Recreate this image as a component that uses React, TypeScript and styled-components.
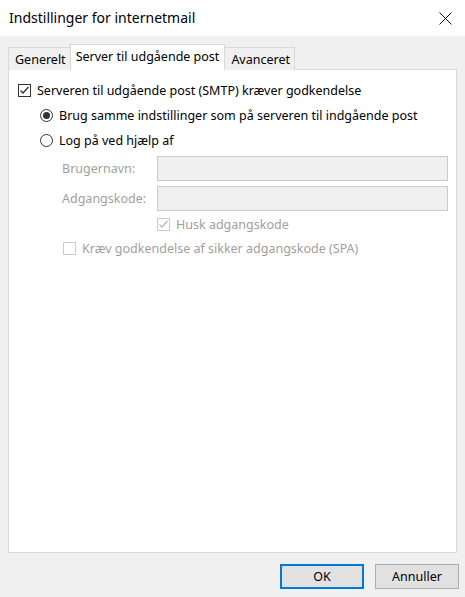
import React from "react";
import styled, { createGlobalStyle, css } from "styled-components";

const GlobalStyle = createGlobalStyle`
  html, body { margin: 0; padding: 0; }
  body { font-family: "Noto Sans", "Open Sans", sans-serif; font-size: 12.5px; color: #000; }
  * { box-sizing: border-box; }
`;

const Window = styled.div`
  width: 465px;
  height: 597px;
  display: flex;
  flex-direction: column;
  background: #f0f0f0;
  overflow: hidden;
`;

const TitleBar = styled.div`
  height: 36px;
  flex: none;
  background: #fff;
  display: flex;
  align-items: center;
  justify-content: space-between;
  padding: 0 13px 0 9px;
`;

const Title = styled.div`
  font-size: 14px;
  color: #000;
  margin-top: -1px;
`;

const Body = styled.div`
  flex: 1;
  display: flex;
  flex-direction: column;
  padding: 8px 8px 0 8px;
`;

const TabStrip = styled.div`
  display: flex;
  align-items: flex-end;
  height: 26px;
  position: relative;
  z-index: 1;
  margin-bottom: -1px;
`;

const Tab = styled.div<{ $active?: boolean }>`
  height: 23px;
  padding: 0 4px 0 6px;
  display: flex;
  align-items: center;
  border: 1px solid #d9d9d9;
  border-bottom: none;
  background: #f0f0f0;
  margin-right: -1px;
  white-space: nowrap;
  ${(p) =>
    p.$active &&
    css`
      height: 26px;
      background: #fff;
      padding: 0 5px 2px 5px;
    `}
`;

const Panel = styled.div`
  height: 484px;
  background: #fff;
  border: 1px solid #d9d9d9;
  padding: 8px 8px 0 9px;
  display: flex;
  flex-direction: column;
`;

const Row = styled.div<{ $indent?: number }>`
  height: 25px;
  display: flex;
  align-items: center;
  gap: 6px;
  padding-left: ${(p) => p.$indent ?? 0}px;
`;

const Label = styled.span<{ $disabled?: boolean }>`
  color: ${(p) => (p.$disabled ? "#a0a0a0" : "#000")};
  white-space: nowrap;
`;

const Box = styled.span<{ $disabled?: boolean }>`
  width: 13px;
  height: 13px;
  flex: none;
  border: 1px solid ${(p) => (p.$disabled ? "#cccccc" : "#333333")};
  background: #fff;
  display: flex;
  align-items: center;
  justify-content: center;
`;

const Radio = styled.span<{ $checked?: boolean }>`
  width: 13px;
  height: 13px;
  flex: none;
  border-radius: 50%;
  border: 1px solid #333;
  background: #fff;
  display: flex;
  align-items: center;
  justify-content: center;
  &::after {
    content: "";
    width: 7px;
    height: 7px;
    border-radius: 50%;
    background: ${(p) => (p.$checked ? "#333" : "transparent")};
  }
`;

const Form = styled.div`
  display: grid;
  grid-template-columns: 95px 1fr;
  row-gap: 5px;
  align-items: center;
  padding-left: 44px;
  margin-top: 3px;
`;

const Input = styled.div`
  height: 25px;
  background: #f0f0f0;
  border: 1px solid #c3ccd6;
`;

const FormRow = styled.div`
  grid-column: 2;
  height: 24px;
  display: flex;
  align-items: center;
  gap: 6px;
  margin-top: -4px;
`;

const Footer = styled.div`
  height: 45px;
  display: flex;
  justify-content: flex-end;
  align-items: flex-start;
  padding: 11px 6px 0 0;
  gap: 11px;
  margin-right: -8px;
`;

const Button = styled.div<{ $default?: boolean }>`
  width: 84px;
  height: 25px;
  background: #e1e1e1;
  border: ${(p) => (p.$default ? "2px solid #0078d7" : "1px solid #adadad")};
  display: flex;
  align-items: center;
  justify-content: center;
  font-size: 12.5px;
`;

const Check = ({ color }: { color: string }) => (
  <svg width="11" height="11" viewBox="0 0 11 11">
    <path d="M1.5 5.5 L4 8 L9.5 2" fill="none" stroke={color} strokeWidth="1.3" />
  </svg>
);

const Checkbox = ({ checked, disabled }: { checked?: boolean; disabled?: boolean }) => (
  <Box $disabled={disabled}>{checked && <Check color={disabled ? "#b8b8b8" : "#333"} />}</Box>
);

export default function App() {
  return (
    <>
      <GlobalStyle />
      <Window>
        <TitleBar>
          <Title>Indstillinger for internetmail</Title>
          <svg width="13" height="13" viewBox="0 0 13 13">
            <path d="M0.5 0.5 L12.5 12.5 M12.5 0.5 L0.5 12.5" stroke="#111" strokeWidth="1" />
          </svg>
        </TitleBar>
        <Body>
          <TabStrip>
            <Tab>Generelt</Tab>
            <Tab $active>Server til udgående post</Tab>
            <Tab>Avanceret</Tab>
          </TabStrip>
          <Panel>
            <Row>
              <Checkbox checked />
              <Label>Serveren til udgående post (SMTP) kræver godkendelse</Label>
            </Row>
            <Row $indent={22}>
              <Radio $checked />
              <Label>Brug samme indstillinger som på serveren til indgående post</Label>
            </Row>
            <Row $indent={22}>
              <Radio />
              <Label>Log på ved hjælp af</Label>
            </Row>
            <Form>
              <Label $disabled>Brugernavn:</Label>
              <Input />
              <Label $disabled>Adgangskode:</Label>
              <Input />
              <FormRow>
                <Checkbox checked disabled />
                <Label $disabled>Husk adgangskode</Label>
              </FormRow>
            </Form>
            <Row $indent={45}>
              <Checkbox disabled />
              <Label $disabled>Kræv godkendelse af sikker adgangskode (SPA)</Label>
            </Row>
          </Panel>
          <Footer>
            <Button $default>OK</Button>
            <Button>Annuller</Button>
          </Footer>
        </Body>
      </Window>
    </>
  );
}
